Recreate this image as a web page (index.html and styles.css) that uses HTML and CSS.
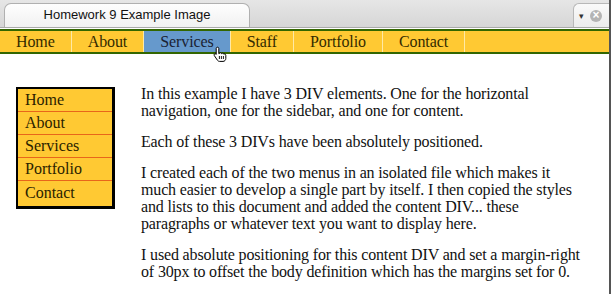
FILE: index.html
```html
<!DOCTYPE html>
<html>
<head>
  <meta charset="utf-8">
  <title>Homework 9 Example Image</title>
  <link rel="stylesheet" href="styles.css">
</head>
<body>
  <!-- Browser tab strip -->
  <div class="tabbar">
    <div class="tab">Homework 9 Example Image</div>
    <div class="tab-spacer"></div>
    <div class="tab-tools">
      <span class="tab-arrow">&#9662;</span>
      <span class="tab-close">&times;</span>
    </div>
  </div>

  <!-- Horizontal navigation -->
  <ul class="nav">
    <li>Home</li>
    <li>About</li>
    <li class="current">Services
      <svg class="cursor" width="14" height="16" viewBox="0 0 14 16">
        <path d="M4.5 1.2c.8 0 1.3.6 1.3 1.3v5.1l.6-.1c.3-.6.8-.8 1.3-.7.5.1.8.5.9.9.3-.4.8-.6 1.3-.5.5.1.8.5.9 1 .4-.3.9-.3 1.3-.1.5.3.7.8.7 1.3v3.1c0 1.6-1.2 2.9-2.8 2.9H6.6c-.9 0-1.7-.5-2.2-1.2L1.3 9.6c-.4-.5-.3-1.2.2-1.6.5-.4 1.2-.3 1.6.2l.1.2V2.5c0-.7.6-1.3 1.3-1.3z" fill="#fff" stroke="#000" stroke-width="1"/>
        <path d="M6.4 10v3M8.4 10v3M10.4 10v3" stroke="#000" stroke-width="0.9"/>
      </svg>
    </li>
    <li>Staff</li>
    <li>Portfolio</li>
    <li>Contact</li>
  </ul>

  <div class="page">
    <!-- Sidebar -->
    <ul class="sidebar">
      <li>Home</li>
      <li>About</li>
      <li>Services</li>
      <li>Portfolio</li>
      <li>Contact</li>
    </ul>

    <!-- Content -->
    <div class="content">
      <p>In this example I have 3 DIV elements. One for the horizontal navigation, one for the sidebar, and one for content.</p>
      <p>Each of these 3 DIVs have been absolutely positioned.</p>
      <p>I created each of the two menus in an isolated file which makes it much easier to develop a single part by itself. I then copied the styles and lists to this document and added the content DIV... these paragraphs or whatever text you want to display here.</p>
      <p>I used absolute positioning for this content DIV and set a margin-right of 30px to offset the body definition which has the margins set for 0.</p>
    </div>
  </div>
</body>
</html>
```

FILE: styles.css
```css
html, body {
  height: 100%;
}

body {
  margin: 0;
  font-family: 'Liberation Serif', 'Times New Roman', serif;
  font-size: 16px;
  color: #111;
  background: #fff;
  border-right: 2px solid #555;
  box-sizing: border-box;
  overflow: hidden;
}

/* Tab strip */
.tabbar {
  display: flex;
  align-items: flex-end;
  height: 27px;
  background: linear-gradient(#e6e6e6, #d6d6d6);
  border-bottom: 1px solid #a9a9a9;
  font-family: 'Liberation Sans', Arial, sans-serif;
}

.tab {
  margin-left: 4px;
  width: 244px;
  height: 23px;
  line-height: 22px;
  text-align: center;
  font-size: 13px;
  color: #111;
  background: linear-gradient(#fefefe, #f1f1f1);
  border: 1px solid #b0b0b0;
  border-bottom: none;
  border-radius: 7px 7px 0 0;
}

.tab-spacer {
  flex: 1;
}

.tab-tools {
  display: flex;
  align-items: center;
  gap: 6px;
  width: 30px;
  height: 23px;
  padding-left: 5px;
  background: linear-gradient(#fafafa, #ececec);
  border: 1px solid #b8b8b8;
  border-right: none;
  border-bottom: none;
  border-radius: 6px 0 0 0;
}

.tab-arrow {
  font-size: 9px;
  color: #333;
}

.tab-close {
  display: inline-block;
  width: 12px;
  height: 12px;
  border-radius: 50%;
  background: #b4b4b4;
  color: #fff;
  font-size: 12px;
  line-height: 11px;
  text-align: center;
  font-weight: bold;
}

/* Horizontal navigation */
.nav {
  display: flex;
  margin: 1px 0 0 0;
  padding: 0;
  list-style: none;
  background: #ffc933;
  border-top: 2px solid #336600;
  border-bottom: 2px solid #336600;
  letter-spacing: -0.1px;
}

.nav li {
  position: relative;
  padding: 0 16px;
  height: 21px;
  line-height: 21px;
  color: #332b00;
  border-right: 1px solid #ffe9a6;
}

.nav li.current {
  background: #6699cc;
  color: #1a2233;
}

.cursor {
  position: absolute;
  left: 69px;
  top: 15px;
}

/* Page body */
.page {
  display: flex;
  align-items: flex-start;
  gap: 26px;
  padding: 31px 28px 0 16px;
}

.sidebar {
  flex: none;
  width: 99px;
  margin: 2px 0 0 0;
  padding: 0;
  list-style: none;
  background: #ffc933;
  border: 2px solid #000;
  border-right-width: 3px;
  border-bottom-width: 3px;
  box-sizing: border-box;
}

.sidebar li {
  height: 22px;
  line-height: 22px;
  padding-left: 7px;
  color: #2a2200;
  border-bottom: 1px solid #e8661a;
}

.sidebar li:last-child {
  height: 25px;
  line-height: 24px;
  border-bottom: none;
}

.content {
  flex: 1;
  line-height: 17px;
  letter-spacing: -0.15px;
}

.content p {
  margin: 0 0 14px 0;
}
```
